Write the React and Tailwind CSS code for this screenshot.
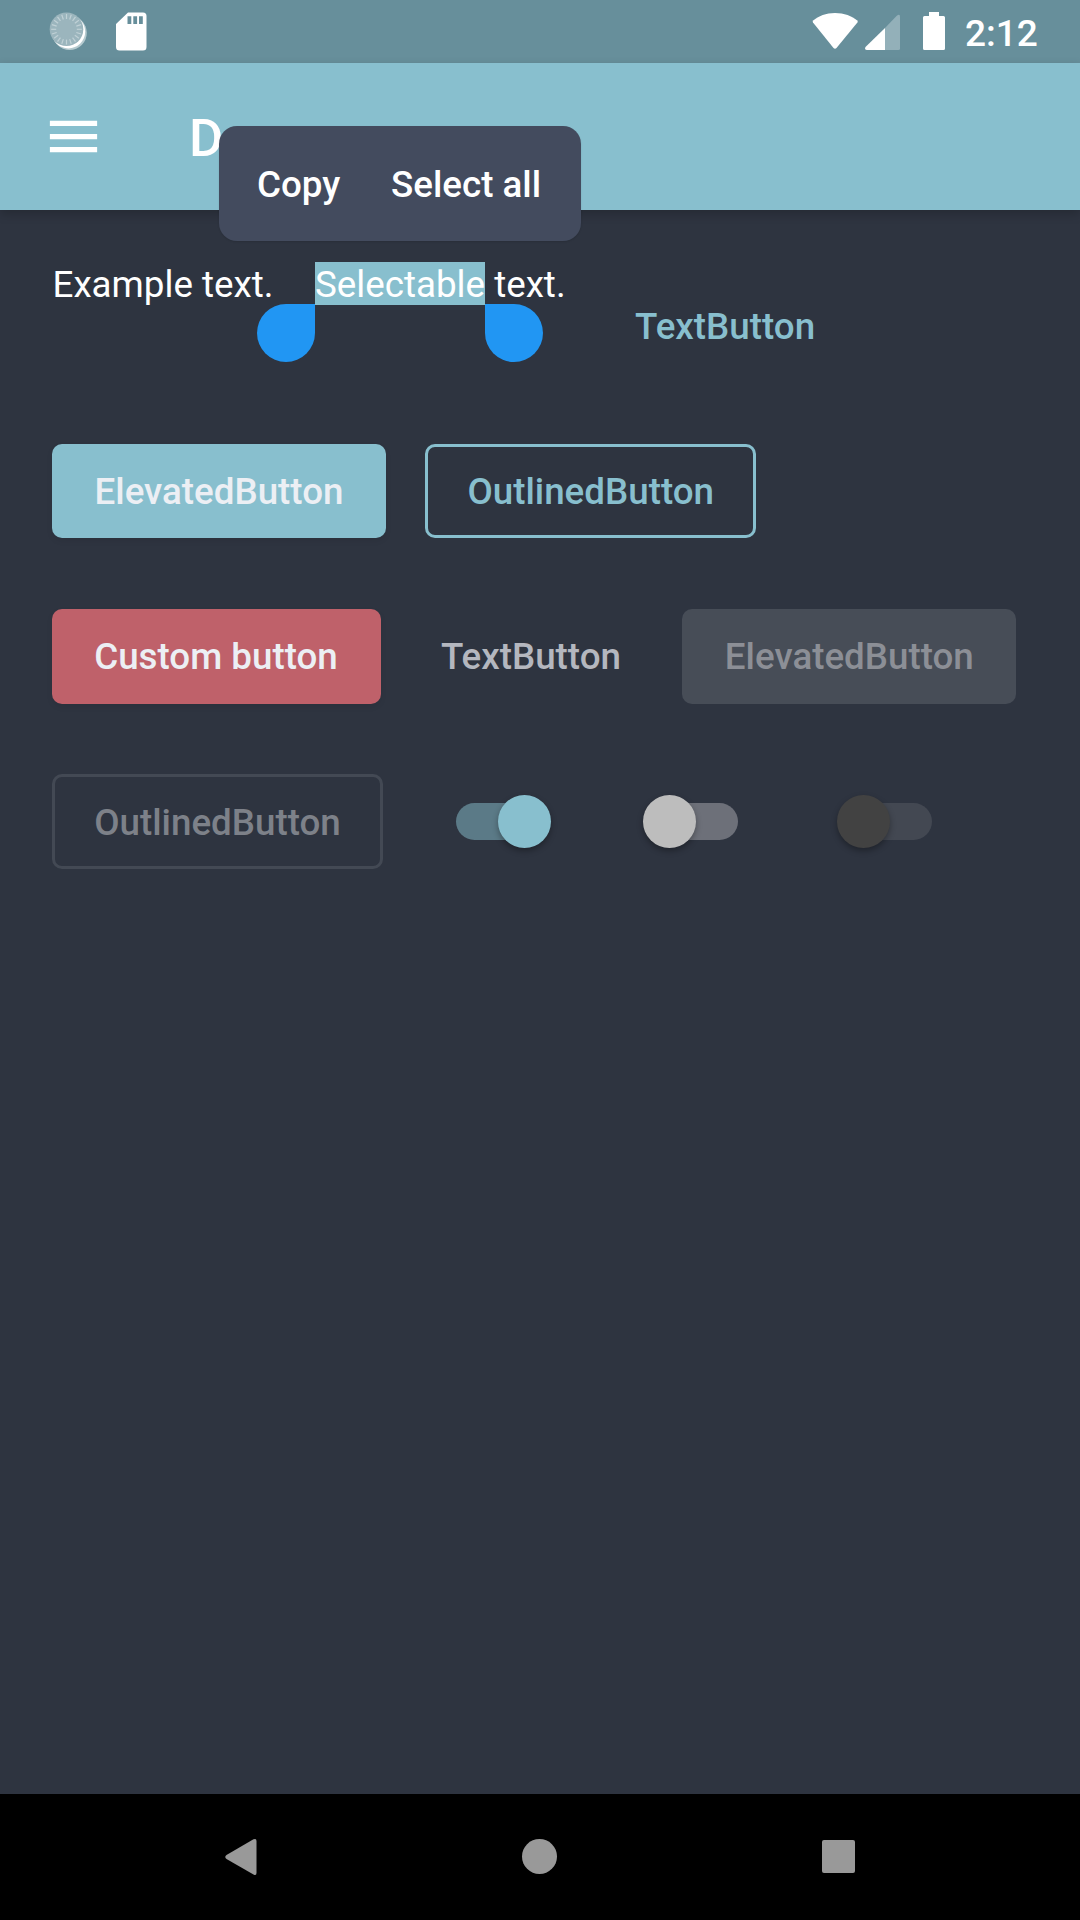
import React from "react";

const buttonBase =
  "flex h-[94.5px] shrink-0 items-center justify-center rounded-[10px] pt-[1.3px] font-medium whitespace-nowrap";

function StatusBar() {
  const ticks = Array.from({ length: 20 }, (_, i) => i * 18);
  return (
    <div className="flex h-[63px] items-start bg-[#678f9b] text-white">
      <svg className="ml-[48px] mt-[10px] h-[42px] w-[40px] shrink-0" viewBox="48 10 40 42">
        <circle cx="69.6" cy="32.8" r="17.2" fill="#b5cacf" />
        <circle cx="68.4" cy="31.6" r="16.8" fill="#fff" />
        <circle cx="66.5" cy="29.3" r="16.8" fill="#9bb5bd" />
        {ticks.map((a) => (
          <path key={a} d="M66.5 14v5" stroke="#c0d1d6" strokeWidth="1.2" transform={`rotate(${a} 66.5 29.3)`} />
        ))}
      </svg>
      <svg className="ml-[28px] mt-[12px] h-[39px] w-[31px] shrink-0" viewBox="116 12 31 39">
        <path
          fill="#fff"
          fillRule="evenodd"
          d="M128 12.500H143a3.500 3.500 0 0 1 3.500 3.500V47a3.500 3.500 0 0 1-3.500 3.500H119.500a3.500 3.500 0 0 1-3.500-3.500V24zM127.500 16.300v7.700h3.800v-7.700zM133.300 16.300v7.700h3.800v-7.700zM139 16.300v7.700h3.800v-7.700z"
        />
      </svg>
      <svg className="ml-[665px] mt-[12px] h-[39px] w-[134px] shrink-0" viewBox="812 12 134 39">
        <path
          fill="#fff"
          d="M813.100 20.500C818.500 16 826 13 835 13s17 3 22.300 7.500q.8.900.1 2L836.500 48.100q-1.500 1.500-3 0L813 22.500q-.7-1.100.1-2z"
        />
        <path fill="#93b0b9" d="M885 28 896.500 16q3.500-2.500 3.500.5V48.500q0 1.500-1.500 1.500H885z" />
        <path fill="#fff" d="M885 28V50H867q-3-.3-1.500-3z" />
        <path
          fill="#fff"
          d="M929 12h10v4h4.500q1.500 0 1.500 1.500v31q0 1.500-1.500 1.500h-19q-1.500 0-1.500-1.500v-31q0-1.500 1.500-1.500H929z"
        />
      </svg>
      <span className="ml-[19px] mt-[12px] text-[37px] leading-[44px] font-medium">2:12</span>
    </div>
  );
}

function AppBar() {
  return (
    <header className="relative z-10 flex h-[147px] items-center bg-[#88bfce] pl-[42px] text-white shadow-[0_4px_10px_rgba(0,0,0,0.2)]">
      <svg className="h-[63px] w-[63px]" viewBox="0 0 24 24" fill="currentColor">
        <path d="M3 18h18v-2H3v2zm0-5h18v-2H3v2zm0-7v2h18V6H3z" />
      </svg>
      <h1 className="ml-[84px] pt-[2px] text-[52.5px] leading-[62px] font-medium">D</h1>
      <div className="absolute left-[219px] top-[63px] flex h-[115px] w-[362px] items-center rounded-[18px] bg-[#434b5e] pl-[38px] pt-[2px] text-[36.75px] font-medium whitespace-nowrap shadow-[0_1px_2px_rgba(0,0,0,0.12)]">
        <span className="w-[134px]">Copy</span>
        <span>Select all</span>
      </div>
    </header>
  );
}

function Handle({ side }) {
  return (
    <span
      className={
        side === "left"
          ? "absolute right-full top-[42px] h-[58px] w-[58px] rounded-full rounded-tr-none bg-[#2196f3]"
          : "absolute left-full top-[42px] h-[58px] w-[58px] rounded-full rounded-tl-none bg-[#2196f3]"
      }
    />
  );
}

const switchColors = {
  on: { track: "bg-[#5b7a87]", thumb: "right-[-8px] bg-[#88bfce]" },
  off: { track: "bg-[#6d7079]", thumb: "left-[-8px] bg-[#bdbdbd]" },
  disabled: { track: "bg-[#434852]", thumb: "left-[-8px] bg-[#424242]" },
};

function Switch({ state, className = "" }) {
  const c = switchColors[state];
  return (
    <div className={`flex h-[126px] w-[155px] shrink-0 items-center justify-center ${className}`}>
      <div className={`relative h-[37px] w-[87px] rounded-full ${c.track}`}>
        <span
          className={`absolute top-[-8px] h-[53px] w-[53px] rounded-full shadow-[0_3px_6px_rgba(0,0,0,0.32)] ${c.thumb}`}
        />
      </div>
    </div>
  );
}

function NavBar() {
  return (
    <nav className="flex h-[126px] items-center justify-between bg-black pl-[224px] pr-[225px] pb-[1px]">
      <svg className="h-[38px] w-[34px]" viewBox="0 0 34 38" fill="#999">
        <path d="M2.500 17 29.500 1.300Q32.500 0 32.500 3V35Q32.500 38 29.500 36.500L2.500 21Q0 19 2.500 17z" />
      </svg>
      <span className="mr-[2px] h-[35px] w-[35px] rounded-full bg-[#999]" />
      <span className="h-[33px] w-[33px] rounded-[2px] bg-[#999]" />
    </nav>
  );
}

export default function App() {
  return (
    <div className="flex h-[1920px] w-[1080px] flex-col overflow-hidden bg-[#2e3440] font-[Roboto,sans-serif] text-[36.75px] leading-[43px]">
      <StatusBar />
      <AppBar />
      <main className="flex flex-1 flex-col gap-[39.375px] pl-[52px] pt-[52px] text-white">
        <div className="flex h-[126.500px] items-start whitespace-nowrap leading-[45px]">
          <p className="w-[263px] pl-[0.5px]">Example text.</p>
          <p className="w-[299px]">
            <span className="relative inline-block h-[43px] w-[170px] bg-[#88bfce] align-top">
              Selectable
              <Handle side="left" />
              <Handle side="right" />
            </span>{" "}
            text.
          </p>
          <button className={`${buttonBase} mt-[16.25px] px-[21px] leading-[43px] text-[#88bfce]`}>TextButton</button>
        </div>
        <div className="flex h-[126px] items-center gap-[39.375px]">
          <button className={`${buttonBase} w-[334px] bg-[#88bfce] text-[#eceff4] shadow-[0_3px_6px_rgba(0,0,0,0.07)]`}>
            ElevatedButton
          </button>
          <button className={`${buttonBase} w-[330.700px] border-3 border-[#88bfce] text-[#88bfce]`}>
            OutlinedButton
          </button>
        </div>
        <div className="flex h-[126px] items-center gap-[39.375px]">
          <button className={`${buttonBase} w-[329px] bg-[#bf616a] pr-[1px] text-[#eceff4] shadow-[0_3px_6px_rgba(0,0,0,0.07)]`}>
            Custom button
          </button>
          <button className={`${buttonBase} w-[222.600px] pr-[1.5px] text-[#b4b7bf]`}>TextButton</button>
          <button className={`${buttonBase} w-[334px] bg-[#474d57] text-[#8c8f96]`}>ElevatedButton</button>
        </div>
        <div className="flex h-[126px] items-center gap-[39.375px]">
          <button className={`${buttonBase} w-[331px] border-3 border-[#434954] text-[#7d8189]`}>
            OutlinedButton
          </button>
          <Switch state="on" />
          <Switch state="off" />
          <Switch state="disabled" />
        </div>
      </main>
      <NavBar />
    </div>
  );
}
